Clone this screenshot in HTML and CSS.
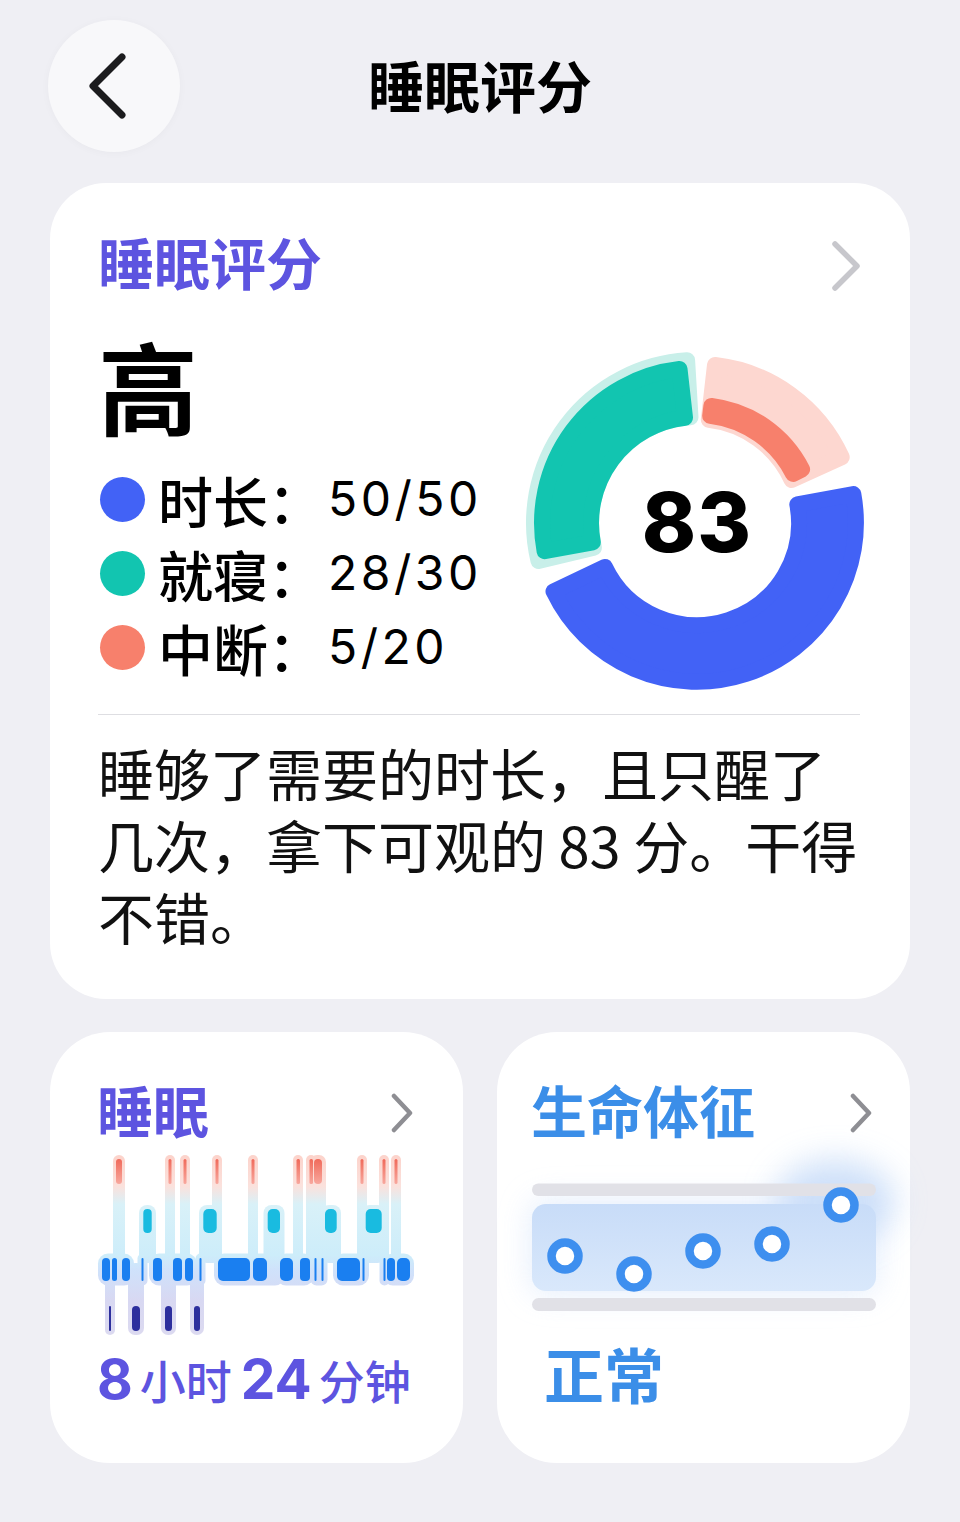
FILE: index.html
```html
<!DOCTYPE html>
<html lang="zh-CN">
<head>
<meta charset="utf-8">
<title>睡眠评分</title>
<link rel="stylesheet" href="styles.css">
</head>
<body>
<div class="page">
  <header class="nav">
    <button class="back" aria-label="返回">
      <svg class="back-icon" width="40" height="68" viewBox="0 0 40 68"><path d="M34 5 L5 34 L34 63" fill="none" stroke="#1c1c1e" stroke-width="7" stroke-linecap="round" stroke-linejoin="round"/></svg>
    </button>
    <h1 class="nav-title">睡眠评分</h1>
    <span class="nav-spacer"></span>
  </header>

  <section class="card score-card">
    <div class="card-head">
      <h2 class="card-title purple">睡眠评分</h2>
      <svg class="chev-lg" width="30" height="52" viewBox="0 0 30 52"><path d="M4 4 L26 26 L4 48" fill="none" stroke="#c7c7cc" stroke-width="5.5" stroke-linecap="round" stroke-linejoin="round"/></svg>
    </div>
    <div class="score-main">
      <div class="score-left">
        <div class="grade">高</div>
        <ul class="legend">
          <li><span class="dot dot-blue"></span><span class="lbl">时长：</span><span class="val">50/50</span></li>
          <li><span class="dot dot-teal"></span><span class="lbl">就寝：</span><span class="val">28/30</span></li>
          <li><span class="dot dot-coral"></span><span class="lbl">中断：</span><span class="val">5/20</span></li>
        </ul>
      </div>
      <div class="donut">
        <svg class="donut-svg" width="354" height="354" viewBox="-177 -177 354 354">
          <g stroke-width="16" stroke-linejoin="round">
            <path d="M-158.5 38.0 A163 163 0 0 1 -9.9 -162.7 L-6.5 -105.8 A106 106 0 0 0 -103.1 24.7 Z" fill="#c8efe9" stroke="#c8efe9"/>
            <path d="M-152.4 28.2 A155 155 0 0 1 -17.5 -154.0 L-12.0 -105.3 A106 106 0 0 0 -104.2 19.3 Z" fill="#12c5b0" stroke="#12c5b0"/>
            <path d="M18.0 -158.0 A159 159 0 0 1 144.7 -65.9 L94.6 -43.1 A104 104 0 0 0 11.8 -103.3 Z" fill="#fdd7d0" stroke="#fdd7d0"/>
            <path d="M14.4 -117.1 A118 118 0 0 1 105.1 -53.6 L96.2 -49.0 A108 108 0 0 0 13.2 -107.2 Z" fill="#f7806c" stroke="#f7806c"/>
            <path d="M156.3 -29.0 A159 159 0 0 1 -143.5 68.4 L-92.1 43.9 A102 102 0 0 0 100.3 -18.6 Z" fill="#4262f6" stroke="#4262f6"/>
          </g>
        </svg>
        <span class="donut-num">83</span>
      </div>
    </div>
    <hr class="divider">
    <p class="summary">睡够了需要的时长，且只醒了几次，拿下可观的 83 分。干得不错。</p>
  </section>

  <div class="tiles">
    <section class="card tile tile-sleep">
      <div class="tile-head">
        <h2 class="card-title purple">睡眠</h2>
        <svg class="chev-sm" width="22" height="40" viewBox="0 0 22 40"><path d="M3 3 L19 20 L3 37" fill="none" stroke="#8e8e93" stroke-width="4.5" stroke-linecap="round" stroke-linejoin="round"/></svg>
      </div>
      <svg class="hypno" width="320" height="184" viewBox="97 1152 320 184">
        <defs>
          <linearGradient id="hg" gradientUnits="userSpaceOnUse" x1="0" y1="1154" x2="0" y2="1336">
            <stop offset="0" stop-color="#fcd3cb"/>
            <stop offset="0.17" stop-color="#fbe1dc"/>
            <stop offset="0.27" stop-color="#d9f1f8"/>
            <stop offset="0.55" stop-color="#cdedfa"/>
            <stop offset="0.63" stop-color="#cfe2fb"/>
            <stop offset="0.8" stop-color="#d8d8f2"/>
            <stop offset="1" stop-color="#dcdaf0"/>
          </linearGradient>
          <linearGradient id="rg" gradientUnits="userSpaceOnUse" x1="0" y1="1158" x2="0" y2="1184">
            <stop offset="0" stop-color="#f06a5a"/>
            <stop offset="1" stop-color="#f8aaa0"/>
          </linearGradient>
        </defs>
        <g fill="url(#hg)">
          <rect x="113" y="1154" width="12" height="108" rx="6"/>
          <rect x="165" y="1154" width="10" height="108" rx="5"/>
          <rect x="180" y="1154" width="10" height="108" rx="5"/>
          <rect x="212" y="1154" width="10" height="108" rx="5"/>
          <rect x="248" y="1154" width="10" height="108" rx="5"/>
          <rect x="293" y="1154" width="10" height="108" rx="5"/>
          <rect x="306" y="1154" width="10" height="108" rx="5"/>
          <rect x="310" y="1154" width="16" height="108" rx="7"/>
          <rect x="357" y="1154" width="10" height="108" rx="5"/>
          <rect x="379" y="1154" width="10" height="108" rx="5"/>
          <rect x="391" y="1154" width="10" height="108" rx="5"/>
          <rect x="139" y="1204" width="17" height="58" rx="8"/>
          <rect x="199" y="1204" width="22" height="58" rx="8"/>
          <rect x="263.5" y="1204" width="21" height="58" rx="8"/>
          <rect x="321" y="1204" width="20" height="58" rx="8"/>
          <rect x="361.5" y="1204" width="24" height="58" rx="8"/>
          <rect x="98" y="1252.5" width="36" height="32" rx="10"/>
          <rect x="137.5" y="1252.5" width="10" height="32" rx="5"/>
          <rect x="149" y="1252.5" width="48" height="32" rx="10"/>
          <rect x="195.5" y="1252.5" width="10" height="32" rx="5"/>
          <rect x="214" y="1252.5" width="71" height="32" rx="10"/>
          <rect x="276" y="1252.5" width="38" height="32" rx="10"/>
          <rect x="310.5" y="1252.5" width="17" height="32" rx="6"/>
          <rect x="333" y="1252.5" width="36" height="32" rx="10"/>
          <rect x="379.5" y="1252.5" width="10" height="32" rx="5"/>
          <rect x="383" y="1252.5" width="31" height="32" rx="10"/>
          <rect x="105" y="1262" width="10" height="72" rx="5"/>
          <rect x="128" y="1262" width="16" height="72" rx="7"/>
          <rect x="161" y="1262" width="15" height="72" rx="7"/>
          <rect x="190" y="1262" width="14" height="72" rx="7"/>
        </g>
        <g fill="url(#rg)">
          <rect x="116" y="1158" width="6" height="25" rx="3"/>
          <rect x="168.5" y="1158" width="3" height="25" rx="1.5"/>
          <rect x="183.5" y="1158" width="3" height="25" rx="1.5"/>
          <rect x="215.5" y="1158" width="3" height="25" rx="1.5"/>
          <rect x="251.5" y="1158" width="3" height="25" rx="1.5"/>
          <rect x="296.5" y="1158" width="3.5" height="25" rx="1.5"/>
          <rect x="309.5" y="1158" width="3.5" height="25" rx="1.5"/>
          <rect x="314" y="1158" width="8" height="25" rx="4"/>
          <rect x="360.5" y="1158" width="3" height="25" rx="1.5"/>
          <rect x="382.5" y="1158" width="3" height="25" rx="1.5"/>
          <rect x="394.5" y="1158" width="3" height="25" rx="1.5"/>
        </g>
        <g fill="#19bbe0">
          <rect x="143.3" y="1208" width="8.4" height="24" rx="4"/>
          <rect x="203.3" y="1208" width="13.4" height="24" rx="5"/>
          <rect x="267.7" y="1208" width="12.3" height="24" rx="5"/>
          <rect x="325" y="1208" width="11.7" height="24" rx="5"/>
          <rect x="365.7" y="1208" width="16" height="24" rx="5"/>
        </g>
        <g fill="#1a7ff0">
          <rect x="102" y="1257" width="8" height="23" rx="4"/>
          <rect x="112" y="1257" width="5" height="23" rx="2.5"/>
          <rect x="122" y="1257" width="8" height="23" rx="4"/>
          <rect x="141.5" y="1257" width="2" height="23" rx="1"/>
          <rect x="153" y="1257" width="9" height="23" rx="4"/>
          <rect x="173" y="1257" width="9" height="23" rx="4"/>
          <rect x="185" y="1257" width="8" height="23" rx="4"/>
          <rect x="199.5" y="1257" width="2" height="23" rx="1"/>
          <rect x="218" y="1257" width="32" height="23" rx="5"/>
          <rect x="253" y="1257" width="14" height="23" rx="5"/>
          <rect x="280" y="1257" width="13" height="23" rx="5"/>
          <rect x="300" y="1257" width="10" height="23" rx="4"/>
          <rect x="314.5" y="1257" width="2" height="23" rx="1"/>
          <rect x="321.5" y="1257" width="2" height="23" rx="1"/>
          <rect x="337" y="1257" width="23" height="23" rx="5"/>
          <rect x="362.5" y="1257" width="2" height="23" rx="1"/>
          <rect x="383.5" y="1257" width="2" height="23" rx="1"/>
          <rect x="387" y="1257" width="8" height="23" rx="4"/>
          <rect x="397" y="1257" width="13" height="23" rx="5"/>
        </g>
        <g fill="#2d2f9d">
          <rect x="109" y="1305" width="2" height="25" rx="1"/>
          <rect x="132" y="1305" width="8" height="25" rx="4"/>
          <rect x="165" y="1305" width="7" height="25" rx="3.5"/>
          <rect x="194" y="1305" width="6" height="25" rx="3"/>
        </g>
      </svg>
      <p class="sleep-total purple">8<span class="unit">小时</span>24<span class="unit">分钟</span></p>
    </section>

    <section class="card tile tile-vitals">
      <div class="tile-head">
        <h2 class="card-title blue-t">生命体征</h2>
        <svg class="chev-sm" width="22" height="40" viewBox="0 0 22 40"><path d="M3 3 L19 20 L3 37" fill="none" stroke="#8e8e93" stroke-width="4.5" stroke-linecap="round" stroke-linejoin="round"/></svg>
      </div>
      <svg class="vitals" width="370" height="175" viewBox="520 1150 370 175">
        <defs>
          <filter id="blur" x="-60%" y="-60%" width="220%" height="220%"><feGaussianBlur stdDeviation="16"/></filter>
          <linearGradient id="band" x1="0" y1="0" x2="0" y2="1">
            <stop offset="0" stop-color="#c8dcf8"/>
            <stop offset="1" stop-color="#d9e8fb"/>
          </linearGradient>
        </defs>
        <rect x="532" y="1200" width="344" height="92" rx="14" fill="#dbe8fb" opacity="0.8" filter="url(#blur)"/>
        <ellipse cx="835" cy="1200" rx="60" ry="42" fill="#c3d9f8" opacity="0.8" filter="url(#blur)"/>
        <rect x="532" y="1182.5" width="344" height="12.5" rx="6.25" fill="#e1e1e7"/>
        <rect x="532" y="1297" width="344" height="13" rx="6.5" fill="#e1e1e7"/>
        <rect x="532" y="1203" width="344" height="87" rx="14" fill="url(#band)"/>
        <g fill="#fff" stroke="#3e8fef" stroke-width="8.5">
          <circle cx="565" cy="1255" r="13.5"/>
          <circle cx="634" cy="1273" r="13.5"/>
          <circle cx="703" cy="1250" r="13.5"/>
          <circle cx="772" cy="1243" r="13.5"/>
          <circle cx="841" cy="1204" r="13.5"/>
        </g>
      </svg>
      <p class="vitals-state blue-t">正常</p>
    </section>
  </div>
</div>
</body>
</html>
```

FILE: styles.css
```css
* { box-sizing: border-box; margin: 0; padding: 0; }

body {
  background: #efeff4;
  font-family: "Noto Sans CJK SC", sans-serif;
  color: #000;
  width: 960px;
  height: 1522px;
  overflow: hidden;
}

.page { padding: 20px 50px 0; }

/* nav */
.nav {
  display: grid;
  grid-template-columns: 132px 1fr 132px;
  align-items: center;
  height: 132px;
}
.back {
  width: 132px;
  height: 132px;
  border-radius: 50%;
  border: none;
  background: #f8f8fa;
  margin-left: -2px;
  display: flex;
  align-items: center;
  justify-content: center;
  box-shadow: 0 1px 8px rgba(0, 0, 0, 0.03);
}
.back-icon { margin-right: 12px; }
.nav-title {
  text-align: center;
  font-size: 56px;
  font-weight: 700;
  line-height: 64px;
  padding-bottom: 4px;
}

/* cards */
.card { background: #fff; border-radius: 56px; }
.purple { color: #5d54e0; }
.blue-t { color: #3b8ee8; }

.score-card {
  margin-top: 31px;
  padding: 46px 50px 47px 48px;
}
.card-head, .tile-head {
  display: flex;
  justify-content: space-between;
  align-items: center;
}
.card-title {
  font-size: 56px;
  font-weight: 700;
  line-height: 64px;
}
.chev-lg { margin-top: 10px; margin-right: -1px; }

.score-main {
  display: flex;
  justify-content: space-between;
  align-items: flex-start;
  margin-top: 53px;
}
.score-left { margin-top: -11px; }
.grade {
  font-size: 100px;
  font-weight: 700;
  line-height: 100px;
}
.legend { list-style: none; margin-top: 27px; }
.legend li {
  display: flex;
  align-items: center;
  height: 74px;
  font-size: 55px;
  line-height: 74px;
  font-weight: 500;
}
.dot {
  width: 45px;
  height: 45px;
  border-radius: 50%;
  margin-right: 13px;
  margin-left: 2px;
}
.dot-blue { background: #4262f6; }
.dot-teal { background: #12c5b0; }
.dot-coral { background: #f7806c; }
.val {
  font-family: Inter, "Noto Sans CJK SC", sans-serif;
  font-weight: 400;
  font-size: 48px;
  letter-spacing: 3.5px;
  margin-left: 5px;
}

.donut {
  display: grid;
  width: 354px;
  height: 354px;
  margin-right: -14px;
}
.donut-svg, .donut-num { grid-area: 1 / 1; }
.donut-num {
  place-self: center;
  font-family: Inter, sans-serif;
  font-weight: 800;
  font-size: 82px;
  line-height: 1;
  letter-spacing: 1px;
}

.divider {
  border: none;
  border-top: 1px solid #dedee2;
  margin-top: 14px;
}
.summary {
  margin-top: 21px;
  font-size: 56px;
  line-height: 72px;
  color: #111;
}

/* tiles */
.tiles {
  display: grid;
  grid-template-columns: repeat(2, minmax(0, 1fr));
  gap: 34px;
  margin-top: 33px;
}
.tile {
  height: 431px;
  border-radius: 60px;
  min-width: 0;
}
.tile-sleep { padding: 45px 50px 0 47px; }
.tile-vitals { padding: 45px 38px 0 34px; }
.chev-sm { margin-top: 7px; }

.hypno { display: block; margin-top: 12px; }
.sleep-total {
  margin-top: 10px;
  font-family: Inter, "Noto Sans CJK SC", sans-serif;
  font-weight: 700;
  font-size: 55px;
  line-height: 64px;
  white-space: nowrap;
}
.sleep-total .unit {
  font-family: "Noto Sans CJK SC", sans-serif;
  font-size: 46px;
  font-weight: 500;
  line-height: 1;
  margin: 0 9px 0 7px;
}

.vitals {
  display: block;
  overflow: visible;
  margin-top: 10px;
  margin-left: -11px;
}
.vitals-state {
  margin-top: 15px;
  margin-left: 13px;
  font-size: 60px;
  font-weight: 700;
  line-height: 64px;
}
```
